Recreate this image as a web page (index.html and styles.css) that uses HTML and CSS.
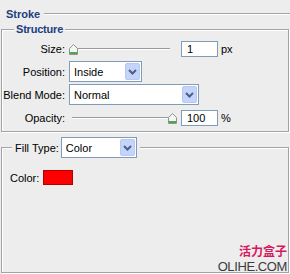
FILE: index.html
```html
<!DOCTYPE html>
<html lang="en">
<head>
    <meta charset="UTF-8">
    <meta name="viewport" content="width=device-width, initial-scale=1.0">
    <title>Stroke</title>
    <link rel="stylesheet" href="styles.css">
</head>
<body>

    <div class="panel">
        <div class="heading">
            <span class="title">Stroke</span>
            <span class="rule"></span>
        </div>

        <fieldset class="group structure">
            <legend class="title">Structure</legend>
            <div class="rows">
                <div class="row">
                    <label class="label" for="size">Size:</label>
                    <div class="slider">
                        <span class="track track-size"></span>
                        <svg class="thumb thumb-min" width="9" height="11" viewBox="0 0 9 11">
                            <polygon points="0.5,4.5 4.5,0.5 8.5,4.5 8.5,10.5 0.5,10.5" fill="#f4f6f4" stroke="#8a968a"/>
                            <rect x="1" y="8" width="7" height="2" fill="#4ea64e"/>
                        </svg>
                    </div>
                    <input class="field" id="size" type="text" value="1">
                    <span class="unit">px</span>
                </div>
                <div class="row">
                    <label class="label">Position:</label>
                    <div class="select select-position">
                        <span class="select-text">Inside</span>
                        <span class="arrow">
                            <svg width="9" height="6" viewBox="0 0 9 6"><polyline points="1,1 4.5,4.5 8,1" fill="none" stroke="#4c5f86" stroke-width="2"/></svg>
                        </span>
                    </div>
                </div>
                <div class="row">
                    <label class="label">Blend Mode:</label>
                    <div class="select select-blend">
                        <span class="select-text">Normal</span>
                        <span class="arrow">
                            <svg width="9" height="6" viewBox="0 0 9 6"><polyline points="1,1 4.5,4.5 8,1" fill="none" stroke="#4c5f86" stroke-width="2"/></svg>
                        </span>
                    </div>
                </div>
                <div class="row">
                    <label class="label" for="opacity">Opacity:</label>
                    <div class="slider">
                        <span class="track track-opacity"></span>
                        <svg class="thumb thumb-max" width="9" height="11" viewBox="0 0 9 11">
                            <polygon points="0.5,4.5 4.5,0.5 8.5,4.5 8.5,10.5 0.5,10.5" fill="#f4f6f4" stroke="#8a968a"/>
                            <rect x="1" y="8" width="7" height="2" fill="#4ea64e"/>
                        </svg>
                    </div>
                    <input class="field" id="opacity" type="text" value="100">
                    <span class="unit">%</span>
                </div>
            </div>
        </fieldset>

        <fieldset class="group fill">
            <legend class="fill-legend">
                <label class="fill-label">Fill Type:</label>
                <div class="select select-fill">
                    <span class="select-text">Color</span>
                    <span class="arrow">
                        <svg width="9" height="6" viewBox="0 0 9 6"><polyline points="1,1 4.5,4.5 8,1" fill="none" stroke="#4c5f86" stroke-width="2"/></svg>
                    </span>
                </div>
            </legend>
            <div class="color-row">
                <span class="color-label">Color:</span>
                <span class="swatch"></span>
            </div>
        </fieldset>

        <div class="watermark">
            <span class="wm-cn">活力盒子</span>
            <span class="wm-en">OLIHE.COM</span>
        </div>
    </div>

</body>
</html>
```

FILE: styles.css
```css
body {
    margin: 0;
    background-color: #ededed;
    font-family: "Liberation Sans", Arial, sans-serif;
    font-size: 11px;
    color: #000;
}

.panel {
    position: relative;
    width: 290px;
    height: 274px;
    display: flex;
    flex-direction: column;
    overflow: hidden;
}

.heading {
    display: flex;
    align-items: flex-start;
    height: 23px;
    padding: 7px 0 0 6px;
    box-sizing: border-box;
}

.title {
    font-weight: bold;
    color: #213e7d;
    font-size: 11px;
    line-height: 14px;
}

.heading .rule {
    flex: 1;
    margin: 6px 0 0 4px;
    border-top: 1px solid #a3a3a3;
    border-bottom: 1px solid #fff;
}

.group {
    margin: 0 1px;
    padding: 0;
    min-width: 0;
    border: 1px solid #a3a3a3;
    box-shadow: inset 1px 1px 0 #fff, 1px 1px 0 #fff;
}

.structure legend {
    margin-left: 12px;
    padding: 0 2px;
    line-height: 13px;
    letter-spacing: -0.2px;
    background-color: #ededed;
}

.rows {
    padding: 1px 0 2px;
}

.row {
    display: flex;
    align-items: center;
    height: 23px;
}

.label {
    width: 63px;
    margin-right: 4px;
    text-align: right;
    white-space: nowrap;
}

.slider {
    position: relative;
    width: 108px;
    height: 23px;
}

.track {
    display: block;
    margin-top: 11px;
    height: 0;
    border-top: 1px solid #9a9a9a;
    border-bottom: 1px solid #fff;
}

.track-size {
    margin-left: 6px;
    width: 95px;
}

.track-opacity {
    margin-left: 3px;
    width: 98px;
}

.thumb {
    position: absolute;
    top: 7px;
}

.thumb-min {
    left: 0;
}

.thumb-max {
    left: 99px;
}

.field {
    width: 37px;
    height: 16px;
    margin: 0 0 0 4px;
    padding: 0 5px;
    box-sizing: border-box;
    border: 1px solid #7f9db9;
    background-color: #fff;
    font-family: inherit;
    font-size: 11px;
    color: #000;
}

.unit {
    margin-left: 3px;
}

.select {
    display: flex;
    align-items: center;
    height: 21px;
    box-sizing: border-box;
    border: 1px solid #7f9db9;
    background-color: #fff;
}

.select-text {
    flex: 1;
    padding-left: 4px;
}

.arrow {
    display: flex;
    align-items: center;
    justify-content: center;
    width: 15px;
    height: 17px;
    margin-right: 1px;
    box-sizing: border-box;
    border: 1px solid #b7c8f2;
    border-radius: 2px;
    background-color: #c4d4fb;
}

.select-position {
    width: 73px;
}

.select-blend {
    width: 130px;
}

.select-fill {
    width: 76px;
    margin-left: 2px;
}

.fill {
    flex: 1;
    margin-top: 5px;
    margin-bottom: 1px;
}

.fill-legend {
    display: flex;
    align-items: center;
    margin-left: 10px;
    padding: 0 3px;
    background-color: #ededed;
}

.color-row {
    display: flex;
    align-items: center;
    margin-top: 12px;
    padding-left: 8px;
    height: 15px;
}

.color-label {
    width: 29px;
}

.swatch {
    width: 30px;
    height: 15px;
    margin-left: 4px;
    box-sizing: border-box;
    border: 1px solid #b40000;
    background-color: #ff0000;
}

.watermark {
    position: absolute;
    right: 3px;
    bottom: 0;
    display: flex;
    flex-direction: column;
    align-items: flex-end;
}

.wm-cn {
    font-family: "Noto Sans CJK SC", sans-serif;
    font-weight: bold;
    font-size: 12px;
    line-height: 17px;
    color: #d6185c;
}

.wm-en {
    font-family: "Liberation Sans", Arial, sans-serif;
    font-size: 13px;
    line-height: 15px;
    letter-spacing: -0.4px;
    color: #3c3c3c;
}
```
